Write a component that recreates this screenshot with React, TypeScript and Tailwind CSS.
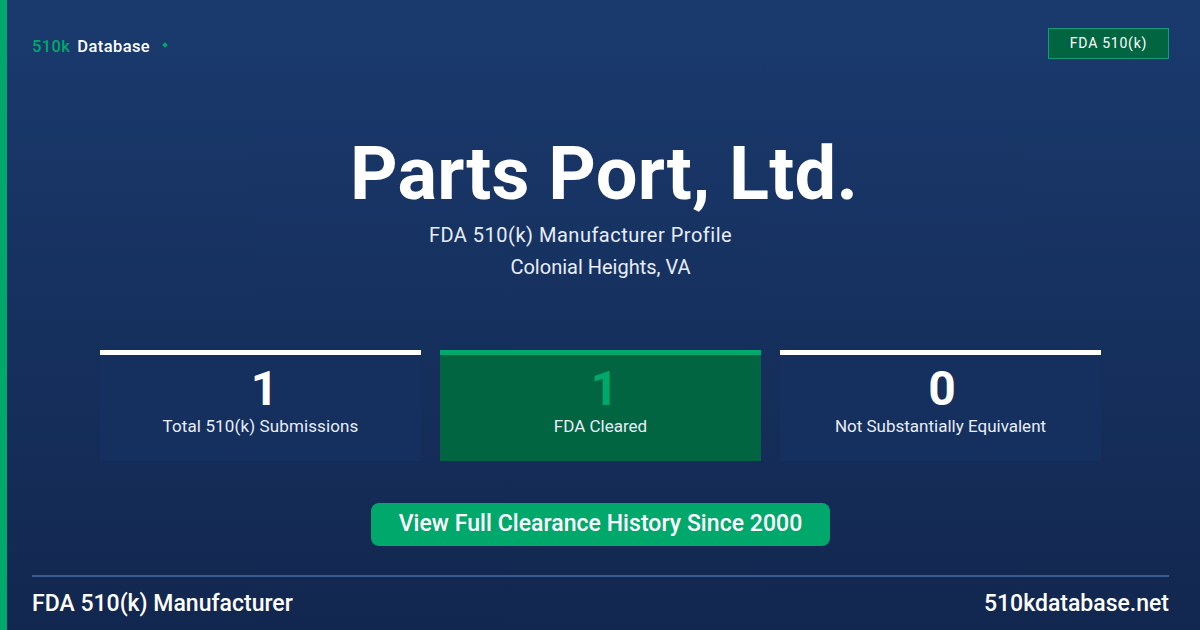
const Stat = ({ n, label, green, wide }: { n: string; label: string; green?: boolean; wide?: boolean }) => (
  <div className={green ? "w-[321px] h-[111px] flex flex-col items-center bg-[#006540] border-t-[5px] border-[#00a86b]" : "w-[321px] h-[111px] flex flex-col items-center bg-[#152f5e] border-t-[5px] border-white"}>
    <div className={[green ? "text-[#00a86b]" : "", n === "1" ? "ml-[8px]" : "ml-[3px]", "text-[48px] leading-[52px] font-bold mt-[8px]"].join(" ")}>{n}</div>
    <div className={wide ? "text-[17px] leading-[20px] text-[#e8eef8] mt-[1px] tracking-[0.12px]" : "text-[17px] leading-[20px] text-[#e8eef8] mt-[1px]"}>{label}</div>
  </div>
);

export default function App() {
  return (
    <div className="w-[1200px] h-[630px] overflow-hidden flex font-['Roboto',sans-serif] text-white bg-gradient-to-b from-[#1a3a6e] to-[#12274f]">
      <div className="w-[7px] shrink-0 bg-[#00a86b]" />
      <div className="flex-1 min-w-0 flex flex-col pl-[25px] pr-[31px]">
        <div className="flex justify-between items-start pt-[28px] h-[100px]">
          <div className="flex items-center h-[36px] text-[16.5px] font-medium tracking-[0.4px] pt-[2px]">
            <span className="text-[#00a86b]">510k</span>
            <span className="ml-[7px]">Database</span>
            <span className="ml-[13px] mb-[5px] w-[4px] h-[4px] rotate-45 bg-[#00a86b]" />
          </div>
          <div className="w-[121px] h-[31px] flex items-center justify-center bg-[#006540] border border-[#149c78] text-[14px] tracking-[0.75px]">FDA 510(k)</div>
        </div>
        <div className="flex flex-col items-center">
          <div className="mt-[32px] ml-[7px] text-[74px] leading-[84px] font-bold tracking-[0.2px]">Parts Port, Ltd.</div>
          <div className="-ml-[40px] mt-[7px] text-[20px] leading-[24px] text-[#e8eef8] tracking-[0.5px]">FDA 510(k) Manufacturer Profile</div>
          <div className="mt-[8px] text-[20px] leading-[24px] text-[#e8eef8]">Colonial Heights, VA</div>
        </div>
        <div className="flex ml-[68px] mt-[71px] gap-[19px]">
          <Stat n="1" label="Total 510(k) Submissions" wide />
          <Stat n="1" label="FDA Cleared" green />
          <Stat n="0" label="Not Substantially Equivalent" />
        </div>
        <div className="mt-[42px] ml-[339px] w-[459px] h-[43px] rounded-[8px] bg-[#00a86b] flex items-center justify-center text-[23px] font-medium tracking-[0.05px]">View Full Clearance History Since 2000</div>
        <div className="mt-[29px] border-t-2 border-[#3a5a94] flex justify-between pt-[14px] text-[23px] leading-[26px] font-medium">
          <span>FDA 510(k) Manufacturer</span>
          <span>510kdatabase.net</span>
        </div>
      </div>
    </div>
  );
}
